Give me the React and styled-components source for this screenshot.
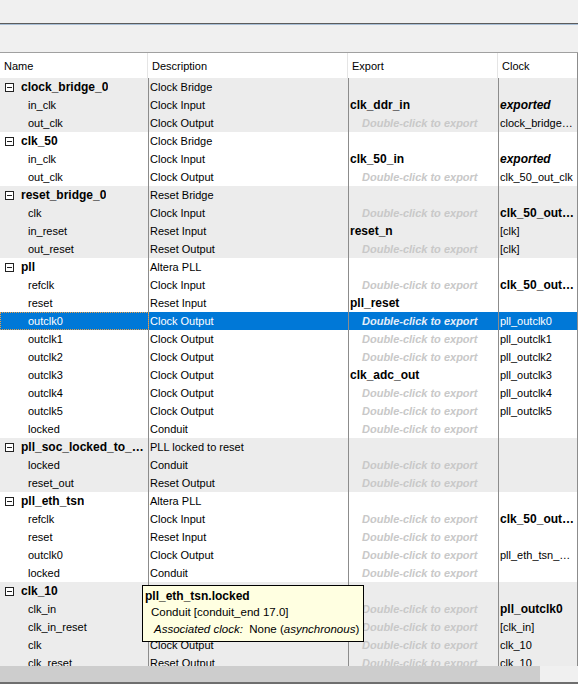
import React from 'react';
import styled, { createGlobalStyle } from 'styled-components';

const DBL = 'Double-click to export';

const groups = [
  {
    name: 'clock_bridge_0', desc: 'Clock Bridge', shade: true,
    items: [
      { name: 'in_clk', desc: 'Clock Input', exp: 'clk_ddr_in', clk: 'exported', clkStyle: 'exported' },
      { name: 'out_clk', desc: 'Clock Output', exp: null, clk: 'clock_bridge_0_out_clk' },
    ],
  },
  {
    name: 'clk_50', desc: 'Clock Bridge',
    items: [
      { name: 'in_clk', desc: 'Clock Input', exp: 'clk_50_in', clk: 'exported', clkStyle: 'exported' },
      { name: 'out_clk', desc: 'Clock Output', exp: null, clk: 'clk_50_out_clk' },
    ],
  },
  {
    name: 'reset_bridge_0', desc: 'Reset Bridge', shade: true,
    items: [
      { name: 'clk', desc: 'Clock Input', exp: null, clk: 'clk_50_out_clk', clkStyle: 'bold' },
      { name: 'in_reset', desc: 'Reset Input', exp: 'reset_n', clk: '[clk]' },
      { name: 'out_reset', desc: 'Reset Output', exp: null, clk: '[clk]' },
    ],
  },
  {
    name: 'pll', desc: 'Altera PLL',
    items: [
      { name: 'refclk', desc: 'Clock Input', exp: null, clk: 'clk_50_out_clk', clkStyle: 'bold' },
      { name: 'reset', desc: 'Reset Input', exp: 'pll_reset', clk: '' },
      { name: 'outclk0', desc: 'Clock Output', exp: null, clk: 'pll_outclk0', selected: true },
      { name: 'outclk1', desc: 'Clock Output', exp: null, clk: 'pll_outclk1' },
      { name: 'outclk2', desc: 'Clock Output', exp: null, clk: 'pll_outclk2' },
      { name: 'outclk3', desc: 'Clock Output', exp: 'clk_adc_out', clk: 'pll_outclk3' },
      { name: 'outclk4', desc: 'Clock Output', exp: null, clk: 'pll_outclk4' },
      { name: 'outclk5', desc: 'Clock Output', exp: null, clk: 'pll_outclk5' },
      { name: 'locked', desc: 'Conduit', exp: null, clk: '' },
    ],
  },
  {
    name: 'pll_soc_locked_to_reset', desc: 'PLL locked to reset', shade: true,
    items: [
      { name: 'locked', desc: 'Conduit', exp: null, clk: '' },
      { name: 'reset_out', desc: 'Reset Output', exp: null, clk: '' },
    ],
  },
  {
    name: 'pll_eth_tsn', desc: 'Altera PLL',
    items: [
      { name: 'refclk', desc: 'Clock Input', exp: null, clk: 'clk_50_out_clk', clkStyle: 'bold' },
      { name: 'reset', desc: 'Reset Input', exp: null, clk: '' },
      { name: 'outclk0', desc: 'Clock Output', exp: null, clk: 'pll_eth_tsn_outclk0' },
      { name: 'locked', desc: 'Conduit', exp: null, clk: '' },
    ],
  },
  {
    name: 'clk_10', desc: 'Clock Bridge', shade: true,
    items: [
      { name: 'clk_in', desc: 'Clock Input', exp: null, clk: 'pll_outclk0', clkStyle: 'bold' },
      { name: 'clk_in_reset', desc: 'Reset Input', exp: null, clk: '[clk_in]' },
      { name: 'clk', desc: 'Clock Output', exp: null, clk: 'clk_10' },
      { name: 'clk_reset', desc: 'Reset Output', exp: null, clk: 'clk_10' },
    ],
  },
];

const GlobalStyle = createGlobalStyle`
  html, body {
    margin: 0;
    padding: 0;
    background: #f0f0f0;
  }
  body {
    font-family: "Liberation Sans", Arial, sans-serif;
    font-size: 11px;
    color: #000;
  }
`;

function ExpandBox() {
  return (
    <svg width="9" height="9" viewBox="0 0 9 9">
      <rect x="0.5" y="0.5" width="8" height="8" fill="#fff" stroke="#222" />
      <line x1="2" y1="4.5" x2="7" y2="4.5" stroke="#222" />
    </svg>
  );
}

function ChildRow({ item, shade }) {
  return (
    <Row $shade={shade} $selected={item.selected}>
      <NameCell $focused={item.selected}>
        <ChildName>{item.name}</ChildName>
      </NameCell>
      <DescCell>{item.desc}</DescCell>
      {item.exp ? (
        <ExportCell>
          <ExportName>{item.exp}</ExportName>
        </ExportCell>
      ) : (
        <ExportCell $hint>
          <Hint $selected={item.selected}>{DBL}</Hint>
        </ExportCell>
      )}
      <ClockCell $variant={item.clkStyle}>{item.clk}</ClockCell>
    </Row>
  );
}

export default function App() {
  return (
    <>
      <GlobalStyle />
      <Frame>
        <TopStrip />
        <Toolbar />
        <Header>
          <HeadCell $w={148}>Name</HeadCell>
          <HeadCell $w={200}>Description</HeadCell>
          <HeadCell $w={150}>Export</HeadCell>
          <HeadCell $w={78}>Clock</HeadCell>
        </Header>
        <Body>
          {groups.map((g) => (
            <React.Fragment key={g.name}>
              <Row $shade={g.shade}>
                <NameCell>
                  <Toggle>
                    <ExpandBox />
                  </Toggle>
                  <GroupName>{g.name}</GroupName>
                </NameCell>
                <DescCell>{g.desc}</DescCell>
                <ExportCell />
                <ClockCell />
              </Row>
              {g.items.map((it, i) => (
                <ChildRow key={g.name + i} item={it} shade={g.shade} />
              ))}
            </React.Fragment>
          ))}
          <Tooltip>
            <TipTitle>pll_eth_tsn.locked</TipTitle>
            <TipLine>Conduit [conduit_end 17.0]</TipLine>
            <TipLine $indent>
              <em>Associated clock:</em>&nbsp; None (<em>asynchronous</em>)
            </TipLine>
          </Tooltip>
        </Body>
        <ScrollBar>
          <Thumb />
        </ScrollBar>
      </Frame>
    </>
  );
}

const Frame = styled.div`
  width: 578px;
  height: 684px;
  display: flex;
  flex-direction: column;
  overflow: hidden;
  background: #f0f0f0;
`;

const TopStrip = styled.div`
  height: 23px;
  flex: none;
  border-bottom: 1px solid #5c5c5c;
  box-shadow: 0 1px 0 #a9bfd6;
`;

const Toolbar = styled.div`
  height: 27px;
  flex: none;
  margin-top: 1px;
  border-bottom: 1px solid #a0a0a0;
`;

const Header = styled.div`
  display: flex;
  height: 25px;
  flex: none;
  background: #fff;
  border-right: 1px solid #8c8c8c;
`;

const HeadCell = styled.div`
  width: ${(p) => p.$w}px;
  flex: none;
  display: flex;
  align-items: center;
  padding-left: 4px;
  box-sizing: border-box;
  border-right: 1px solid #e5e5e5;
  font-size: 11px;
  color: #000;
  &:last-child {
    flex: 1;
    border-right: none;
  }
`;

const Body = styled.div`
  position: relative;
  flex: 1;
  overflow: hidden;
  background: #fff;
`;

const Row = styled.div`
  display: flex;
  height: 18px;
  line-height: 18px;
  background: ${(p) => (p.$selected ? '#0078d7' : p.$shade ? '#ececec' : '#fff')};
  color: ${(p) => (p.$selected ? '#fff' : '#000')};
`;

const Cell = styled.div`
  flex: none;
  box-sizing: border-box;
  white-space: nowrap;
  overflow: hidden;
  text-overflow: ellipsis;
  border-right: 1px solid #8c8c8c;
`;

const NameCell = styled(Cell)`
  width: 149px;
  display: flex;
  align-items: center;
  padding-left: 5px;
  outline: ${(p) => (p.$focused ? '1px dotted #e8a04a' : 'none')};
  outline-offset: -1px;
`;

const Toggle = styled.span`
  display: flex;
  width: 16px;
  flex: none;
`;

const GroupName = styled.span`
  font-weight: bold;
  font-size: 12px;
  overflow: hidden;
  text-overflow: ellipsis;
  white-space: nowrap;
`;

const ChildName = styled.span`
  padding-left: 23px;
`;

const DescCell = styled(Cell)`
  width: 200px;
  padding-left: 1px;
`;

const ExportCell = styled(Cell)`
  width: 150px;
  padding-left: ${(p) => (p.$hint ? '13px' : '1px')};
`;

const ExportName = styled.span`
  font-weight: bold;
  font-size: 12px;
`;

const Hint = styled.span`
  font-weight: bold;
  font-style: italic;
  color: ${(p) => (p.$selected ? '#e6eef8' : '#c8c8c8')};
`;

const ClockCell = styled(Cell)`
  width: 79px;
  padding-left: 1px;
  padding-right: 2px;
  font-weight: ${(p) => (p.$variant ? 'bold' : 'normal')};
  font-style: ${(p) => (p.$variant === 'exported' ? 'italic' : 'normal')};
  font-size: ${(p) => (p.$variant ? '12px' : '11px')};
`;

const Tooltip = styled.div`
  position: absolute;
  left: 142px;
  top: 507px;
  width: max-content;
  padding: 2px 4px 3px 2px;
  background: #ffffe1;
  border: 1px solid #000;
  color: #000;
`;

const TipTitle = styled.div`
  font-weight: bold;
  font-size: 12px;
  line-height: 16px;
`;

const TipLine = styled.div`
  font-size: 11.5px;
  line-height: 17px;
  padding-left: ${(p) => (p.$indent ? '9px' : '6px')};
  white-space: nowrap;
`;

const ScrollBar = styled.div`
  height: 16px;
  flex: none;
  background: #f0f0f0;
  border-bottom: 2px solid #6e6e6e;
  display: flex;
`;

const Thumb = styled.div`
  width: 540px;
  height: 100%;
  background: #cdcdcd;
`;
